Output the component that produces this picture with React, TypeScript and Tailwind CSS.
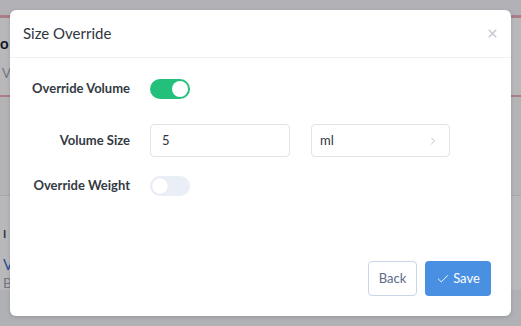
import React from 'react';
import { Check, ChevronRight, X } from 'lucide-react';

const Toggle = ({ on }: { on: boolean }) => (
  <div
    className={`flex h-[20px] w-[40px] items-center rounded-full px-[2px] ${
      on ? 'justify-end bg-[#22c07a]' : 'justify-start bg-[#e9eef7]'
    }`}
  >
    <div className={`h-[16px] w-[16px] rounded-full bg-white ${on ? '' : 'shadow-[0_0_1px_rgba(0,0,0,0.15)]'}`}></div>
  </div>
);

const Row = ({ label, children }: { label: string; children: React.ReactNode }) => (
  <div className="flex items-center">
    <div className="w-[120px] text-right text-[13px] font-bold text-[#333a44]">{label}</div>
    <div className="ml-[20px] flex items-center gap-[21px]">{children}</div>
  </div>
);

const App = () => {
  return (
    <div className="relative h-[326px] w-[521px] overflow-hidden bg-[#f4f5f7] font-['Lato',sans-serif]">
      {/* Page behind the dialog, only the strips at the edges show */}
      <div className="h-[15px] bg-[#f7f7f8]"></div>
      <div className="border-t-[3px] border-[#f0a9b6] bg-white">
        <div className="h-[77px] pt-[18px]">
          <div className="text-[15px] font-bold leading-none text-gray-900">o</div>
          <div className="mt-[16px] pl-[2px] text-[13px] leading-none text-gray-400">V</div>
        </div>
      </div>
      <div className="h-[100px] border-t-[2px] border-[#f0a9b6] bg-[#f9f9fa]"></div>
      <div className="border-t border-gray-200 bg-white pl-[3px] pt-[32px]">
        <div className="text-[11px] font-bold leading-none text-gray-700">I</div>
        <div className="mt-[18px] text-[15px] leading-none text-[#2f6fc4]">V</div>
        <div className="mt-[4px] text-[14px] leading-none text-gray-400">B</div>
      </div>

      {/* Overlay */}
      <div className="absolute inset-0 flex items-start justify-center bg-[#15151f]/30 pt-[10px]">
        <div className="flex h-[306px] w-[501px] flex-col rounded-[6px] bg-white shadow-[0_1px_4px_rgba(0,0,0,0.15)]">
          <div className="flex h-[48px] items-center justify-between border-b border-[#f0f1f3] pl-[13px] pr-[12px]">
            <span className="text-[15px] text-[#2f3540]">Size Override</span>
            <X size={13} strokeWidth={3.2} className="text-[#c8ccd3]" />
          </div>

          <div className="flex flex-1 flex-col pt-[21px]">
            <Row label="Override Volume">
              <Toggle on />
            </Row>
            <div className="mt-[25px]">
              <Row label="Volume Size">
                <div className="flex h-[33px] w-[140px] items-center rounded-[4px] border border-[#dfe3ea] px-[11px] text-[13px] text-[#2f3540]">
                  5
                </div>
                <div className="flex h-[33px] w-[139px] items-center justify-between rounded-[4px] border border-[#dfe3ea] pl-[8px] pr-[10px] text-[13px] text-[#2f3540]">
                  <span>ml</span>
                  <ChevronRight size={12} strokeWidth={1.5} className="text-[#a9aeb8]" />
                </div>
              </Row>
            </div>
            <div className="mt-[19px]">
              <Row label="Override Weight">
                <Toggle on={false} />
              </Row>
            </div>

            <div className="mt-auto flex justify-end gap-[8px] pb-[20px] pr-[20px]">
              <button className="h-[35px] w-[49px] rounded-[4px] border border-[#c9d6ea] text-[13px] text-[#5b6b86]">
                Back
              </button>
              <button className="flex h-[35px] w-[66px] items-center justify-center gap-[3px] rounded-[4px] bg-[#4a90e2] text-[13px] text-white">
                <Check size={14} strokeWidth={1.6} />
                Save
              </button>
            </div>
          </div>
        </div>
      </div>
    </div>
  );
};

export default App;
